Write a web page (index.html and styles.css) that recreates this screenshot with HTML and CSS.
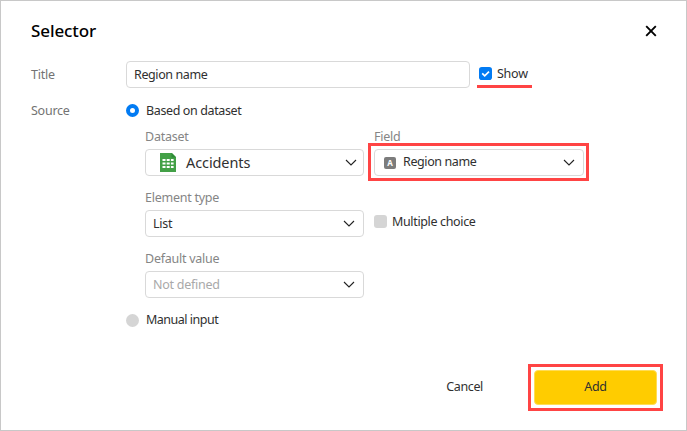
FILE: index.html
```
<!DOCTYPE html>
<html lang="en">
<head>
<meta charset="utf-8">
<title>Selector</title>
<link rel="stylesheet" href="styles.css">
</head>
<body>
<main class="dialog">
  <header class="header">
    <h1 class="heading">Selector</h1>
    <svg class="close" viewBox="0 0 12 12"><path d="M1.2 1.2 10.8 10.8M10.8 1.2 1.2 10.8"/></svg>
  </header>
  <section class="row title-row">
    <div class="label">Title</div>
    <div class="control input"><span class="t-region">Region name</span></div>
    <div class="show marked-line">
      <svg class="check" viewBox="0 0 13 13"><rect width="13" height="13" rx="2.8"/><path d="M3.2 6.4 5.7 8.8 10 4.6"/></svg>
      <span class="t-show">Show</span>
    </div>
  </section>
  <section class="row source-row">
    <div class="label">Source</div>
    <div class="source">
      <div class="option"><i class="radio on"></i><span class="t-based">Based on dataset</span></div>
      <div class="fields">
        <div class="field wide">
          <div class="caption">Dataset</div>
          <div class="control select">
            <svg class="sheet" viewBox="0 0 16 19"><path fill="#43a047" d="M0 0H12L16 4V19H0z"/><path fill="#2e8b37" d="M11.5 0 16 4.5H11.5z"/><path fill="#fff" d="M2.500 6h3v2h-3zM6.700 6h3v2h-3zM10.900 6h2.700v2h-2.700zM2.500 9.500h3v2h-3zM6.700 9.500h3v2h-3zM10.900 9.500h2.700v2h-2.700zM2.500 13h3v2h-3zM6.700 13h3v2h-3zM10.900 13h2.700v2h-2.700z"/></svg>
            <span class="t-accidents">Accidents</span>
            <svg class="chevron" viewBox="0 0 12 7"><path d="M1 1 6 6 11 1"/></svg>
          </div>
        </div>
        <div class="field narrow">
          <div class="caption">Field</div>
          <div class="control select marked-box">
            <span class="type">A</span>
            <span class="t-region">Region name</span>
            <svg class="chevron" viewBox="0 0 12 7"><path d="M1 1 6 6 11 1"/></svg>
          </div>
        </div>
        <div class="field wide">
          <div class="caption">Element type</div>
          <div class="control select"><span class="t-list">List</span><svg class="chevron" viewBox="0 0 12 7"><path d="M1 1 6 6 11 1"/></svg></div>
        </div>
        <div class="multiple"><i class="box"></i><span class="t-multi">Multiple choice</span></div>
        <div class="field wide">
          <div class="caption">Default value</div>
          <div class="control select empty"><span>Not defined</span><svg class="chevron" viewBox="0 0 12 7"><path d="M1 1 6 6 11 1"/></svg></div>
        </div>
      </div>
      <div class="option"><i class="radio"></i><span class="t-manual">Manual input</span></div>
    </div>
  </section>
  <footer class="footer">
    <div class="cancel">Cancel</div>
    <div class="add marked-box"><span>Add</span></div>
  </footer>
</main>
</body>
</html>
```
FILE: styles.css
```
* { box-sizing: border-box; }
body { margin: 0; }
.dialog {
  width: 687px; height: 431px;
  display: flex; flex-direction: column;
  padding: 0 29px;
  border: 1px solid #c8c8c8;
  background: #fff; color: #303030;
  font: 12.5px/18px "Noto Sans", sans-serif;
  letter-spacing: -0.25px;
  white-space: nowrap;
}
.header { height: 60px; display: flex; justify-content: space-between; padding: 18px 0 0 1px; }
.heading { margin: 0; font-size: 17px; line-height: 23px; font-weight: 500; letter-spacing: -0.1px; color: #000; }
.close { width: 12px; height: 12px; margin-top: 6px; }
.close path { stroke: #000; stroke-width: 1.9; fill: none; }
.row { display: flex; }
.label { width: 96px; padding-left: 1px; color: #737373; }
.title-row .label { padding-top: 5px; }
.title-row { height: 41px; }
.control {
  height: 27px; display: flex; align-items: center;
  border: 1px solid #d9d9d9; border-radius: 4px;
}
.input { width: 344px; padding-left: 7px; }
.show { position: relative; display: flex; gap: 5px; height: 27px; width: 55px; margin-left: 7px; padding: 4px 0 0 2px; }
.marked-line::after { content: ""; position: absolute; left: 0; top: 24px; width: 55px; height: 3px; background: #ff4444; }
.check { width: 13px; height: 13px; margin-top: 2px; }
.check rect { fill: #027bf3; }
.check path { stroke: #fff; stroke-width: 1.7; fill: none; }
.source-row { height: 260px; }
.option { height: 18px; display: flex; align-items: center; gap: 7px; }
.option:first-child { margin-top: -1px; }
.radio { width: 13px; height: 13px; border-radius: 50%; background: #d5d5d5; }
.radio.on { background: #fff; border: 4.500px solid #027bf3; }
.fields { display: grid; grid-template-columns: 219px 210px; column-gap: 10px; grid-auto-rows: 61px; margin: 9px 0 0 19px; }
.caption { height: 21px; color: #858585; }
.select { padding: 0 9px 0 7px; }
.chevron { width: 12px; height: 7px; margin-left: auto; }
.chevron path { stroke: #222; stroke-width: 1.1; fill: none; }
.wide .chevron { margin-right: -1px; }
.wide:first-child .chevron { margin-right: -3px; }
.narrow .chevron { margin-right: -1px; }
.sheet { width: 16px; height: 19px; margin: 0 10px 0 7px; }
.t-accidents { font-size: 14.5px; letter-spacing: -0.1px; margin-top: -2px; }
.t-region { letter-spacing: -0.4px; }
.narrow .t-region { margin-top: -1px; }
.t-based { letter-spacing: -0.38px; padding-top: 2px; }
.t-manual { letter-spacing: -0.5px; }
.t-multi { letter-spacing: -0.35px; }
.type { width: 12px; height: 12px; margin: 0 7px 0 2px; border-radius: 2px; background: #7c7c7c; color: #fff; font: bold 8px/12px "Noto Sans", sans-serif; text-align: center; letter-spacing: 0; }
.marked-box { position: relative; }
.marked-box::after { content: ""; position: absolute; inset: -7px -6px -6px -7px; border: 3px solid #ff4444; }
.multiple { display: flex; gap: 5px; height: 61px; padding-top: 24px; }
.box { width: 13px; height: 13px; margin-top: 2px; border-radius: 3px; background: #d5d5d5; }
.empty span { color: #a9a9a9; }
.footer { display: flex; justify-content: flex-end; align-items: center; gap: 51px; height: 50px; }
.cancel { letter-spacing: -0.35px; }
.add { width: 123px; height: 35px; border: 1px solid #ffdc55; border-radius: 4px; background: #ffcc00; display: flex; align-items: center; justify-content: center; }
.add::after { inset: -7px; }
```
